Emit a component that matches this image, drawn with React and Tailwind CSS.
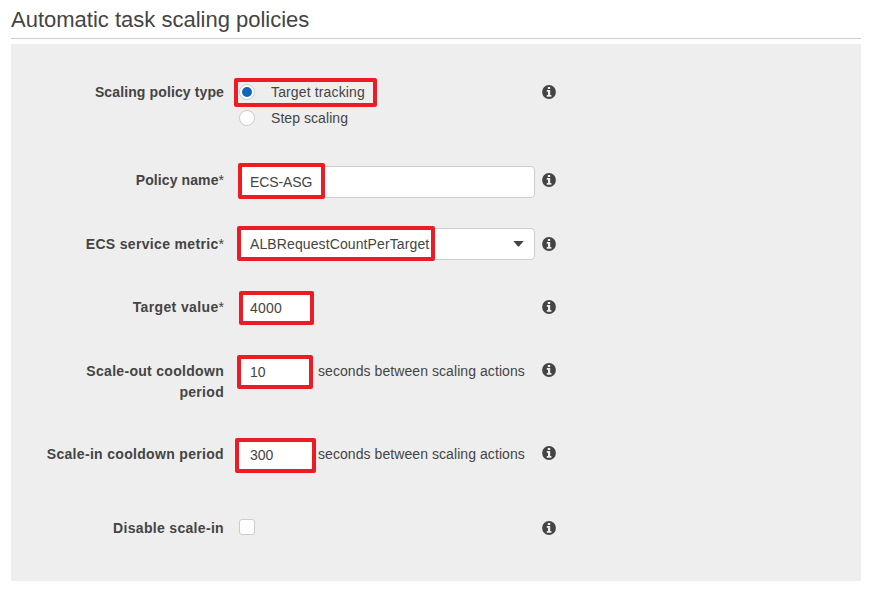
import React from "react";

function InfoIcon({ className = "mt-[3px]" }) {
  return (
    <svg viewBox="0 0 14 14" className={`ml-[7px] h-[14px] w-[14px] shrink-0 ${className}`}>
      <circle cx="7" cy="7" r="6.9" fill="#444" />
      <path d="M5.8 2h2.4v2H5.8zM4.8 5h3.4v5h1.2v1.8H4.8V10H6V6.7H4.8z" fill="#eee" />
    </svg>
  );
}

function Row({ label, labelClass = "", required, className, iconClass, children }) {
  return (
    <div className={`flex items-start ${className}`}>
      <div className={`w-[213px] shrink-0 text-right font-bold ${labelClass}`}>
        {label}
        {required && <span className="font-normal tracking-normal">*</span>}
      </div>
      <div className="relative ml-[14px] w-[297px] shrink-0">{children}</div>
      <InfoIcon className={iconClass} />
    </div>
  );
}

function Highlight({ className }) {
  return <div className={`absolute rounded-[2px] border-4 border-[#ed1c24] ${className}`} />;
}

function Radio({ label, labelClass, checked }) {
  return (
    <div className="flex h-[26px] items-start">
      <span className="mt-[2px] ml-px flex h-4 w-4 items-center justify-center rounded-full border border-[#ccc] bg-white">
        {checked && <span className="h-[10px] w-[10px] shrink-0 rounded-full bg-[#1166bb]" />}
      </span>
      <span className={`ml-4 ${labelClass}`}>{label}</span>
    </div>
  );
}

const field = "flex h-8 items-center rounded-[4px] border border-[#ccc] bg-white pl-[11px]";

export default function App() {
  return (
    <div className="h-[591px] w-[871px] overflow-hidden bg-white pr-[10px] pl-[11px] font-['Liberation_Sans',Arial,sans-serif] text-[14px] leading-[21px] text-[#444]">
      <h1 className="h-[39px] border-b border-[#ccc] pt-[6px] text-[22px] leading-[28px]">
        Automatic task scaling policies
      </h1>
      <main className="mt-[5px] h-[537px] bg-[#eee] pt-[38px]">
        <Row label="Scaling policy type" labelClass="tracking-[0.12px]" className="h-[88px]">
          <Radio label="Target tracking" labelClass="tracking-[0.14px]" checked />
          <Radio label="Step scaling" labelClass="tracking-[0.06px]" />
          <Highlight className="-top-1 -left-1 h-[29px] w-[143px]" />
        </Row>
        <Row label="Policy name" labelClass="tracking-[0.1px]" required className="h-16">
          <div className={`${field} -mt-1 tracking-[-0.1px]`}>ECS-ASG</div>
          <Highlight className="-top-[7px] left-0 h-9 w-[87px]" />
        </Row>
        <Row label="ECS service metric" labelClass="tracking-[0.33px]" required className="h-[63px]">
          <div className={`${field} -mt-[6px] justify-between pr-[10px] tracking-[0.11px]`}>
            ALBRequestCountPerTarget
            <svg viewBox="0 0 11 6" className="h-[6px] w-[11px]">
              <path d="M.3 0h10.4L6 5.6H5z" fill="#444" />
            </svg>
          </div>
          <Highlight className="-top-2 -left-px h-[35px] w-[198px]" />
        </Row>
        <Row label="Target value" labelClass="tracking-[0.37px]" required className="h-16">
          <div className={`${field} -mt-[5px] ml-px w-[74px] -indent-px tracking-[0.2px]`}>4000</div>
          <Highlight className="-top-[6px] left-px h-[34px] w-[75px]" />
        </Row>
        <Row
          label={<>Scale-out cooldown<br />period</>}
          labelClass="tracking-[0.3px]"
          className="h-[83px]"
          iconClass="mt-[2px]"
        >
          <div className="flex">
            <div className={`${field} -mt-[5px] w-[75px]`}>10</div>
            <span className="ml-[5px] tracking-[0.07px] whitespace-nowrap">seconds between scaling actions</span>
          </div>
          <Highlight className="-top-[6px] -left-px h-[34px] w-[76px]" />
        </Row>
        <Row
          label="Scale-in cooldown period"
          labelClass="tracking-[0.32px]"
          className="h-[74px]"
          iconClass="mt-[2px]"
        >
          <div className="flex">
            <div className={`${field} -mt-[5px] w-[75px]`}>300</div>
            <span className="ml-[5px] tracking-[0.07px] whitespace-nowrap">seconds between scaling actions</span>
          </div>
          <Highlight className="-top-[6px] -left-[3px] h-[35px] w-[81px]" />
        </Row>
        <Row label="Disable scale-in" labelClass="tracking-[0.32px]">
          <div className="mt-px ml-px h-4 w-4 rounded-[3px] border border-[#ccc] bg-white" />
        </Row>
      </main>
    </div>
  );
}
